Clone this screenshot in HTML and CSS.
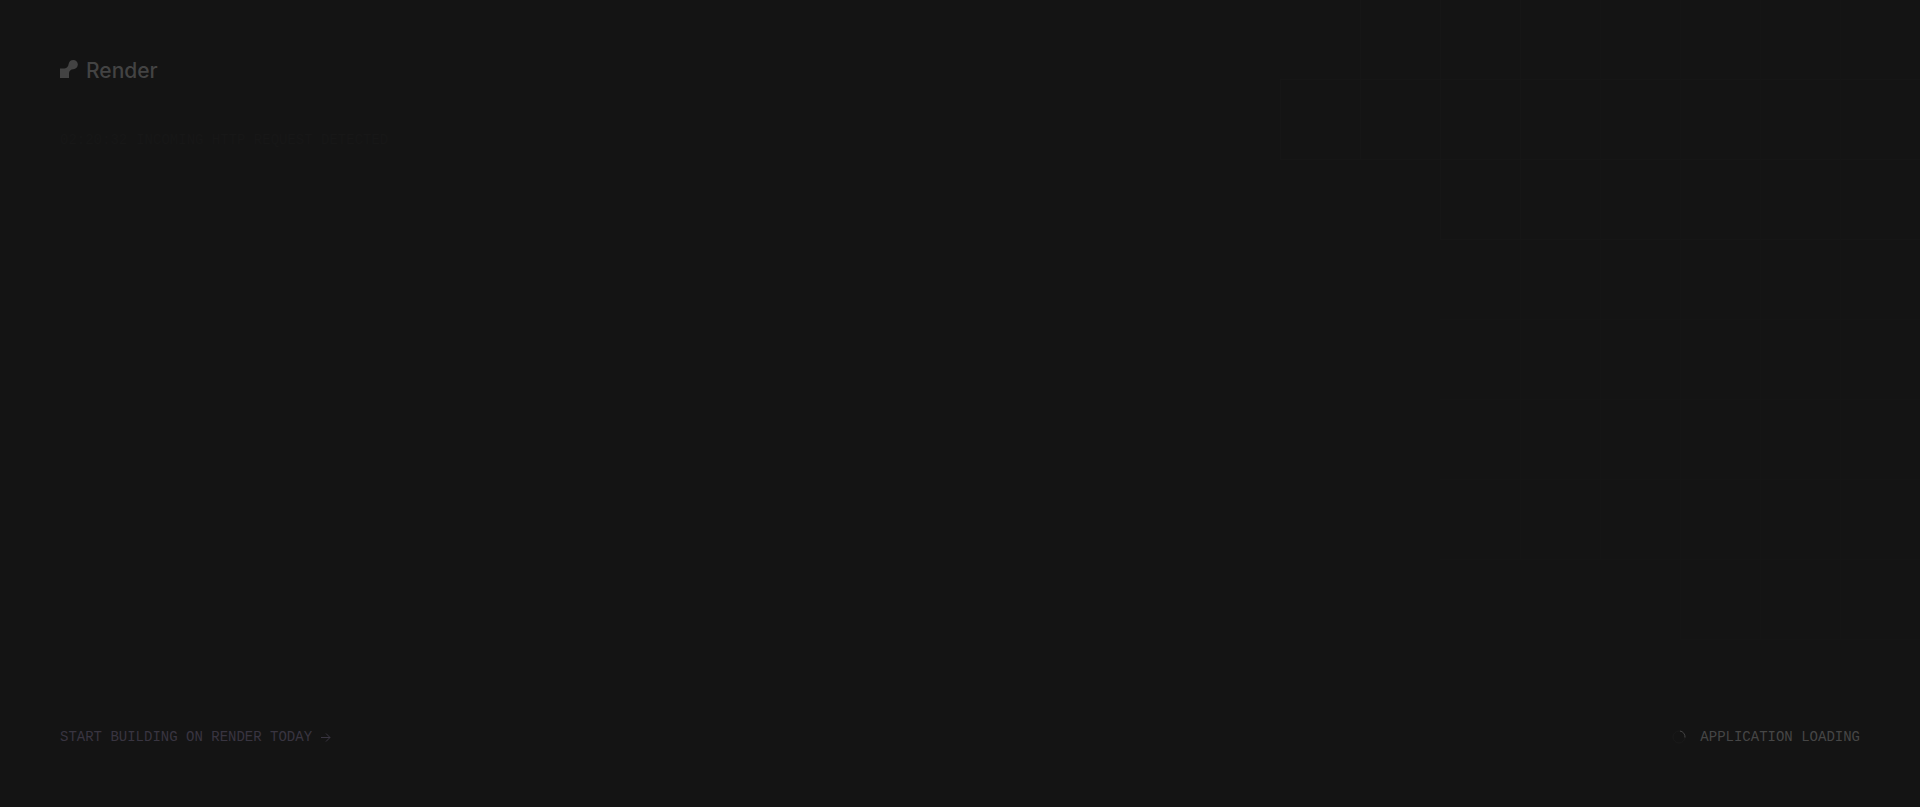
FILE: index.html
```html
<!DOCTYPE html>
<html lang="en">
<head>
<meta charset="utf-8">
<title>Render – Application Loading</title>
<link rel="stylesheet" href="styles.css">
</head>
<body>
<svg class="grid" viewBox="0 0 640 640" aria-hidden="true">
  <path class="line" d="M0 79.500H640M0 159.500H640M160 239.500H640M.5 80V160M80.500 0V160M160.500 0V240M240.500 0V240"/>
  <path class="line faint" d="M160 319.500H640M160 399.500H640M160 479.500H640M160 559.500H640M400 639.500H640M240.500 240V560M320.500 0V560M400.500 0V640M480.500 0V640M560.500 0V640"/>
</svg>
<main class="page">
  <header class="top">
    <a class="brand" href="#" aria-label="Render">
      <svg class="mark" viewBox="0 0 18 18" aria-hidden="true"><path d="M13.2 0a4.600 4.600 0 0 0-4.500 3.800c-.5 2.700-1.600 4.700-4.200 4.700H0V18h9V13.500C9 11 10.800 9.200 13.300 9.200A4.600 4.600 0 0 0 13.200 0Z"/></svg>
      <span class="word">Render</span>
    </a>
    <p class="log"><span>02:20:32</span><span>INCOMING HTTP REQUEST DETECTED</span></p>
  </header>
  <footer class="bottom">
    <a class="cta" href="#">START BUILDING ON RENDER TODAY
      <svg class="arrow" viewBox="0 0 12 12" aria-hidden="true"><path d="M1 6.500H10M6 2.500L10 6.500L6 10.500"/></svg>
    </a>
    <p class="status">
      <svg class="spinner" viewBox="0 0 14 14" aria-hidden="true"><circle class="track" cx="7" cy="7" r="6"/><path class="arc" d="M8 1A6 6 0 0 1 13 7.500"/></svg>
      APPLICATION LOADING
    </p>
  </footer>
</main>
</body>
</html>
```
FILE: styles.css
```css
* { box-sizing: border-box; }
body {
  margin: 0;
  background: #141414;
  font-family: "Liberation Mono", monospace;
}
.grid {
  position: absolute;
  top: 0;
  right: 0;
  width: 640px;
  height: 640px;
  fill: none;
}
.line { stroke: #161616; }
.faint { stroke: #151515; }
.page {
  position: relative;
  min-height: 100vh;
  padding: 60px;
  display: flex;
  flex-direction: column;
  justify-content: space-between;
}
.brand {
  display: flex;
  width: max-content;
  align-items: flex-start;
  gap: 8px;
  color: #434343;
  text-decoration: none;
}
.mark { width: 18px; height: 18px; fill: currentColor; }
.word { font: 500 21px/22px Inter, sans-serif; }
.log {
  display: flex;
  gap: 9px;
  margin: 48px 0 0;
  font-size: 14px;
  line-height: 20px;
  color: #171717;
}
.bottom {
  display: flex;
  justify-content: space-between;
  font-size: 14px;
  line-height: 20px;
}
.cta {
  display: flex;
  align-items: center;
  gap: 8px;
  color: #393541;
  text-decoration: none;
}
.arrow { width: 12px; height: 12px; fill: none; stroke: currentColor; }
.status {
  display: flex;
  align-items: center;
  gap: 14px;
  margin: 0;
  color: #464646;
}
.spinner { width: 14px; height: 14px; fill: none; }
.track { stroke: #1a1a1a; }
.arc { stroke: #434343; }
```
